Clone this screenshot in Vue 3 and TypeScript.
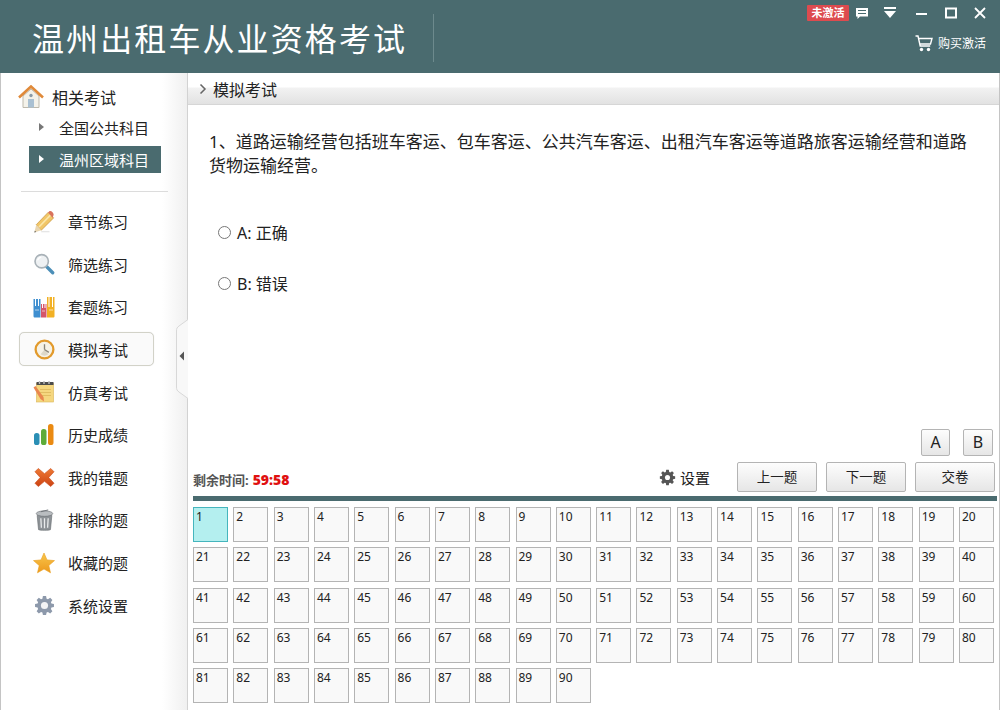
<script setup lang="ts">
const menu = [
  { id: 'pencil', label: '章节练习' },
  { id: 'search', label: '筛选练习' },
  { id: 'books', label: '套题练习' },
  { id: 'clock', label: '模拟考试', active: true },
  { id: 'note', label: '仿真考试' },
  { id: 'chart', label: '历史成绩' },
  { id: 'cross', label: '我的错题' },
  { id: 'trash', label: '排除的题' },
  { id: 'star', label: '收藏的题' },
  { id: 'gear', label: '系统设置' },
]
const nums = Array.from({ length: 90 }, (_, i) => i + 1)
const gearPath =
  'M11.500 1h-3l-.5 2.500-1.300.5-2.100-1.400-2.100 2.100L3.900 6.800l-.5 1.300L1 8.500v3l2.400.5.5 1.300-1.400 2.100 2.100 2.100 2.100-1.400 1.300.5.5 2.400h3l.5-2.400 1.300-.5 2.100 1.400 2.100-2.100-1.400-2.100.5-1.300 2.400-.5v-3l-2.400-.4-.5-1.300 1.400-2.100-2.100-2.100L13.300 4l-1.300-.5z'
</script>

<template>
  <div class="app">
    <header class="top">
      <h1>温州出租车从业资格考试</h1>
      <i class="title-line"></i>
      <div class="top-right">
        <div class="win-row">
          <span class="badge">未激活</span>
          <svg width="14" height="13" viewBox="0 0 14 13" class="w1"><path d="M1 1h12v8.500H5L2.500 12V9.500H1z" fill="#fff"/><path d="M3 3.500h8M3 6.500h8" stroke="#4a6b6f" stroke-width="1.200"/></svg>
          <svg width="14" height="12" viewBox="0 0 14 12" class="w2"><path d="M1 0h12v2H1zM1 4h12l-6 7z" fill="#fff"/></svg>
          <svg width="12" height="12" viewBox="0 0 12 12" class="w3"><path d="M0 6h11" stroke="#fff" stroke-width="2"/></svg>
          <svg width="12" height="12" viewBox="0 0 12 12" class="w4"><path d="M1 1.500h10v9H1z" fill="none" stroke="#fff" stroke-width="2"/></svg>
          <svg width="12" height="12" viewBox="0 0 12 12" class="w5"><path d="M1 1l10 10M11 1L1 11" stroke="#fff" stroke-width="1.800"/></svg>
        </div>
        <div class="buy">
          <svg width="18" height="17" viewBox="0 0 18 17"><path d="M.5 1H3l2.200 10h10M3.600 3.500H17l-1.500 5.500H4.700" fill="none" stroke="#fff" stroke-width="1.400"/><circle cx="6.500" cy="14.500" r="1.700" fill="#fff"/><circle cx="13.500" cy="14.500" r="1.700" fill="#fff"/></svg>
          <span>购买激活</span>
        </div>
      </div>
    </header>

    <div class="body">
      <aside class="side">
        <div class="side-head">
          <svg width="26" height="24" viewBox="0 0 26 24">
            <path d="M5 11v11.500h16V11L13 4z" fill="#f4f2ea" stroke="#bdb9ac"/>
            <path d="M1 12.500L13 1.500l12 11" fill="none" stroke="#e08a3a" stroke-width="2.600"/>
            <rect x="10" y="14" width="6" height="8.500" fill="#a9c0d2"/>
            <circle cx="13" cy="10.500" r="1.700" fill="#8a9aa6"/>
          </svg>
          <span>相关考试</span>
        </div>
        <div class="sub"><i class="tri"></i>全国公共科目</div>
        <div class="sub on"><i class="tri"></i>温州区域科目</div>
        <div class="rule"></div>
        <nav class="menu">
          <div v-for="m in menu" :key="m.id" class="item" :class="{ active: m.active }">
            <span class="ico">
              <svg v-if="m.id === 'pencil'" width="22" height="22" viewBox="0 0 24 24">
                <path d="M3.500 15L16.500 1.500l6 6L9 21z" fill="#f1c667" stroke="#c8963e" stroke-width=".8"/>
                <path d="M6.500 17.500L19 4.500" stroke="#fbe6a8" stroke-width="1.800"/>
                <path d="M16.500 1.500l1-1c1-.7 2.500-.5 3.800.8s1.500 2.800.8 3.800l-.6 2.400z" fill="#d9735c"/>
                <path d="M3.500 15L1.500 23.500 9 21z" fill="#e9d6b0"/>
                <path d="M2 21.500L1.500 23.500l2-.7z" fill="#555"/>
                <path d="M9 22.500h9" stroke="#e6e6e6" stroke-width="1.500"/>
              </svg>
              <svg v-else-if="m.id === 'search'" width="22" height="22" viewBox="0 0 24 24">
                <path d="M15 15l6.500 6.500" stroke="#4c8fb8" stroke-width="3.600" stroke-linecap="round"/>
                <circle cx="9.500" cy="9" r="7.300" fill="#eef1f3" stroke="#a9b2b8" stroke-width="1.800"/>
                <path d="M5 8a5 5 0 0 1 4-3.500" fill="none" stroke="#fff" stroke-width="1.500"/>
              </svg>
              <svg v-else-if="m.id === 'books'" width="22" height="22" viewBox="0 0 22 22">
                <path d="M.5 3h7v18.500H2c-1 0-1.500-.5-1.500-1.500z" fill="#3f8fd0"/>
                <path d="M8 8h5.500v13.500H8z" fill="#d5566a"/>
                <path d="M14 1h7.500v19c0 1-.5 1.500-1.500 1.500h-6z" fill="#f2b124"/>
                <path d="M2.500 1v9M5.500 1v9M9.500 5v7M12 5v7M16 0v11M19.500 0v11" stroke="#fff" stroke-width="1"/>
                <path d="M2 14h4M9 15h3M16 14h4" stroke="#fff" stroke-opacity=".6"/>
              </svg>
              <svg v-else-if="m.id === 'clock'" width="21" height="21" viewBox="0 0 22 22">
                <circle cx="11" cy="11" r="9.300" fill="#f6f2e6" stroke="#e29a2c" stroke-width="2.400"/>
                <path d="M11 11l-4 5a6.500 6.500 0 0 0 8 0z" fill="#ddd8c8"/>
                <path d="M11 11V5.500M11 11l4.500 3" stroke="#8a8578" stroke-width="1.400"/>
              </svg>
              <svg v-else-if="m.id === 'note'" width="22" height="22" viewBox="0 0 22 22">
                <rect x="3.500" y="2.500" width="17" height="18.500" fill="#f5d77f" stroke="#d9b457" stroke-width=".6"/>
                <rect x="3.500" y="1" width="17" height="3" fill="#4c4c4c"/>
                <path d="M6.500 0v3M11 0v3M16 0v3" stroke="#bbb" stroke-width="1.400"/>
                <path d="M7 8.500h11M7 11.500h11M7 14.500h11" stroke="#e1bd62"/>
                <path d="M.5 6.500L2.500 5l8 11 .5 4.500-3.500-2.500z" fill="#e9864e"/>
              </svg>
              <svg v-else-if="m.id === 'chart'" width="20" height="21" viewBox="0 0 20 21">
                <rect x="0" y="9" width="5.500" height="12" rx="2.600" fill="#2b8fb5"/>
                <rect x="7" y="5" width="5.500" height="16" rx="2.600" fill="#5dab38"/>
                <rect x="14" y="0" width="5.500" height="21" rx="2.600" fill="#ea8a12"/>
              </svg>
              <svg v-else-if="m.id === 'cross'" width="21" height="21" viewBox="0 0 22 22">
                <defs><linearGradient id="crossFill" x1="0" y1="0" x2="0" y2="1"><stop offset="0" stop-color="#ee7a34"/><stop offset="1" stop-color="#cc4213"/></linearGradient></defs>
                <path d="M4.500 1.500L11 7l6.500-5.500 3.500 3.500-5.500 6 5.500 6-3.500 3.500L11 15l-6.500 5.500L1 17l5.500-6L1 5z" fill="url(#crossFill)" stroke="#c94716" stroke-width=".6"/>
              </svg>
              <svg v-else-if="m.id === 'trash'" width="19" height="22" viewBox="0 0 20 24">
                <path d="M2 7h16l-1.500 15.500c-2 1-11 1-13 0z" fill="#8d9296" stroke="#6a6f74" stroke-width=".7"/>
                <ellipse cx="10" cy="5" rx="9" ry="3" fill="#b9bdc0" stroke="#6a6f74" stroke-width=".7"/>
                <path d="M6 10l.6 10.500M10 10v11M14 10l-.6 10.500" stroke="#e9ebec" stroke-width="1.400"/>
                <path d="M6 3l8-2" stroke="#6a6f74"/>
              </svg>
              <svg v-else-if="m.id === 'star'" width="22" height="22" viewBox="0 0 22 22">
                <defs><linearGradient id="starFill" x1="0" y1="0" x2="0" y2="1"><stop offset="0" stop-color="#f9c74c"/><stop offset="1" stop-color="#ec981c"/></linearGradient></defs>
                <path d="M11 1l3 6.900 7.500.7-5.700 4.900 1.700 7.300L11 17l-6.500 3.800 1.700-7.300L.5 8.600 8 7.900z" fill="url(#starFill)" stroke="#e9a01f" stroke-width=".6"/>
              </svg>
              <svg v-else width="21" height="21" viewBox="0 0 20 20">
                <path :d="gearPath" fill="#8d99ab"/>
                <circle cx="10" cy="10" r="3.400" fill="#f3f4f6"/>
              </svg>
            </span>
            <span>{{ m.label }}</span>
          </div>
        </nav>
        <div class="handle">
          <svg width="12" height="80" viewBox="0 0 12 80">
            <path d="M12 .5L3 7c-2 1.500-2.500 2.500-2.500 5v56c0 2.500.5 3.500 2.500 5l9 6.500" fill="#f8f8f8" stroke="#d8d8d8"/>
            <path d="M8 32.500v9l-4.500-4.500z" fill="#555"/>
          </svg>
        </div>
      </aside>

      <main class="main">
        <div class="crumb">
          <svg width="8" height="10" viewBox="0 0 8 10"><path d="M1.500 .5L6 5 1.500 9.500" fill="none" stroke="#666" stroke-width="1.500"/></svg>
          <span>模拟考试</span>
        </div>
        <div class="content">
          <p class="q">1、道路运输经营包括班车客运、包车客运、公共汽车客运、出租汽车客运等道路旅客运输经营和道路货物运输经营。</p>
          <label class="opt"><i class="radio"></i>A: 正确</label>
          <label class="opt"><i class="radio"></i>B: 错误</label>
        </div>
        <div class="answers">
          <button class="btn ab first">A</button>
          <button class="btn ab">B</button>
        </div>
        <div class="bar">
          <div class="time">剩余时间:<b>59:58</b></div>
          <div class="setting">
            <svg width="17" height="17" viewBox="0 0 20 20"><path :d="gearPath" fill="#555"/><circle cx="10" cy="10" r="3" fill="#fff"/></svg>
            <span>设置</span>
          </div>
          <button class="btn nav">上一题</button>
          <button class="btn nav">下一题</button>
          <button class="btn nav">交卷</button>
        </div>
        <div class="strip"></div>
        <div class="cells">
          <div v-for="n in nums" :key="n" class="cell" :class="{ cur: n === 1 }">{{ n }}</div>
        </div>
      </main>
    </div>
  </div>
</template>

<style>
html, body { margin: 0; overflow: hidden; background: #fff; }
</style>

<style scoped>
.app { width: 1000px; height: 710px; display: flex; flex-direction: column; font-family: "Noto Sans", "Noto Sans CJK SC", sans-serif; color: #222; overflow: hidden; }
.top { height: 73px; flex: none; background: #4a6b6f; display: flex; align-items: flex-start; position: relative; color: #fff; }
h1 { margin: 15px 0 0 32px; font-size: 32px; line-height: 47px; font-weight: 400; letter-spacing: 2.100px; white-space: nowrap; }
.title-line { width: 1px; height: 48px; margin: 14px 0 0 26px; background: #6d8a8d; }
.top-right { margin-left: auto; display: flex; flex-direction: column; align-items: flex-end; }
.win-row { display: flex; align-items: center; height: 16px; margin-top: 5px; padding-right: 14px; }
.badge { width: 42px; height: 16px; background: #dd4b4f; font-size: 11px; font-weight: 700; line-height: 16px; text-align: center; border-radius: 1px; }
.w1 { margin-left: 6px; }
.w2 { margin-left: 14px; }
.w3 { margin-left: 19px; margin-top: 2px; }
.w4 { margin-left: 17px; }
.w5 { margin-left: 17px; }
.buy { display: flex; align-items: center; gap: 5px; font-size: 12px; margin: 13px 14px 0 0; }

.body { flex: 1; display: flex; min-height: 0; border-left: 1px solid #c4c4c4; border-right: 1px solid #c4c4c4; }
.side { width: 186px; flex: none; position: relative; border-right: 1px solid #d2d2d2; background: linear-gradient(90deg, #fff 161px, #f0f0f0 100%); }
.side-head { display: flex; align-items: center; gap: 8px; padding: 10px 0 0 17px; height: 27px; font-size: 16px; color: #222; }
.sub { box-sizing: border-box; margin-left: 28px; width: 132px; height: 27px; padding-bottom: 1px; display: flex; align-items: center; font-size: 15px; color: #222; margin-top: 5px; }
.side-head + .sub { margin-top: 4px; }
.sub.on { background: #4a6b6f; color: #fff; }
.tri { width: 0; height: 0; border-left: 5px solid #777; border-top: 4.500px solid transparent; border-bottom: 4.500px solid transparent; margin: 0 15px 0 10px; }
.on .tri { border-left-color: #fff; }
.rule { height: 1px; background: #dcdcdc; margin: 18px 19px 0 20px; }
.menu { display: flex; flex-direction: column; padding-top: 12.500px; }
.item { height: 34px; width: 135px; margin: 0 0 8.650px 18px; display: flex; align-items: center; font-size: 15px; color: #222; box-sizing: border-box; border: 1px solid transparent; border-radius: 5px; }
.item.active { border-color: #d2d2c8; background: #fafafa; box-shadow: 0 0 1px #ddd; }
.ico { width: 24px; height: 24px; margin-left: 12px; margin-right: 12px; display: flex; align-items: center; justify-content: center; }
.handle { position: absolute; right: -1px; top: 246px; height: 80px; line-height: 0; }

.main { flex: 1; display: flex; flex-direction: column; min-width: 0; }
.crumb { height: 31px; flex: none; display: flex; align-items: center; gap: 6px; padding: 0 0 0 11px; font-size: 16px; color: #222; background: linear-gradient(#fff 0 14px, #f2f2f2 15px, #e2e2e2 100%); border-bottom: 1px solid #d6d6d6; }
.content { flex: 1; padding: 25px 25px 0 21px; }
.q { margin: 0 0 43px; font-size: 17px; line-height: 24px; color: #222; }
.opt { display: flex; align-items: center; height: 22px; margin: 0 0 29px 9px; font-size: 16px; color: #222; }
.radio { width: 11px; height: 11px; border: 1px solid #777; border-radius: 50%; margin-right: 6px; background: #fff; }
.answers { display: flex; justify-content: flex-end; gap: 13px; padding-right: 6px; }
.btn { box-sizing: border-box; border: 1px solid #b4b4b4; border-radius: 2px; background: linear-gradient(#fdfdfd, #e6e6e6); font-family: inherit; color: #222; padding: 0 0 2px; }
.ab { width: 30px; height: 27px; font-size: 16px; }
.ab.first { width: 29px; }
.bar { display: flex; align-items: center; height: 30px; margin-top: 6px; padding: 0 4px 0 5px; }
.time { font-size: 13px; font-weight: 700; color: #555; margin-top: 5px; white-space: nowrap; }
.time b { color: #e01010; font-size: 14px; margin-left: 4px; }
.setting { margin-left: auto; display: flex; align-items: center; gap: 4px; font-size: 15px; color: #222; margin-right: 27px; }
.nav { width: 80px; height: 30px; font-size: 13.500px; margin-left: 9px; }
.nav:first-of-type { margin-left: 0; }
.strip { height: 5px; background: #4a6b6f; margin: 4px 2px 0 5px; flex: none; }
.cells { display: grid; grid-template-columns: repeat(20, 35px); grid-auto-rows: 35px; justify-content: space-between; row-gap: 5.250px; width: 801px; margin: 6px 0 7px 5px; }
.cell { box-sizing: border-box; border: 1px solid #b4b4b4; background: #f9f9f9; font-size: 12px; line-height: 15px; padding: 1px 0 0 2px; color: #222; }
.cell.cur { background: #b4efef; border-color: #45b5bd; }
</style>
